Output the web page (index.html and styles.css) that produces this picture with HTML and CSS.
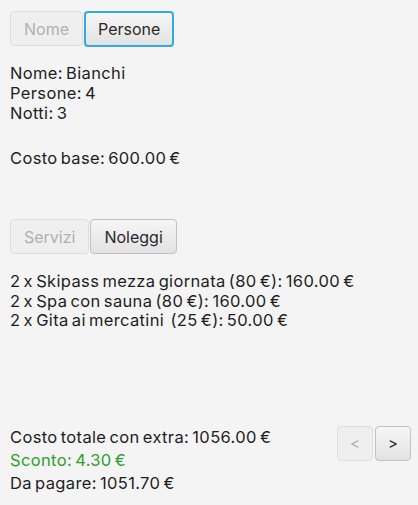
FILE: index.html
```html
<!DOCTYPE html>
<html lang="it">
<head>
<meta charset="utf-8">
<title>Riepilogo</title>
<link rel="stylesheet" href="styles.css">
</head>
<body>
<div class="page">
  <div class="toggle-row">
    <button class="btn btn-off">Nome</button>
    <button class="btn btn-on btn-focus">Persone</button>
  </div>
  <div class="info">
    <div class="line">Nome: Bianchi</div>
    <div class="line">Persone: 4</div>
    <div class="line">Notti: 3</div>
  </div>
  <div class="base line">Costo base: 600.00 €</div>

  <div class="toggle-row toggle-row-2">
    <button class="btn btn-off">Servizi</button>
    <button class="btn btn-on">Noleggi</button>
  </div>
  <div class="services">
    <div class="line">2 x Skipass mezza giornata (80 €): 160.00 €</div>
    <div class="line">2 x Spa con sauna (80 €): 160.00 €</div>
    <div class="line">2 x Gita ai mercatini&nbsp; (25 €): 50.00 €</div>
  </div>

  <div class="footer">
    <div class="totals">
      <div class="tline">Costo totale con extra: 1056.00 €</div>
      <div class="tline discount">Sconto: 4.30 €</div>
      <div class="tline">Da pagare: 1051.70 €</div>
    </div>
    <div class="nav">
      <button class="btn btn-off btn-nav">&lt;</button>
      <button class="btn btn-on btn-nav">&gt;</button>
    </div>
  </div>
</div>
</body>
</html>
```
FILE: styles.css
```css
html, body {
  margin: 0;
  padding: 0;
  background: #f4f4f4;
}
body {
  font-family: "Inter", "Liberation Sans", sans-serif;
  font-size: 16.5px;
  letter-spacing: 0.35px;
  word-spacing: -1.8px;
  color: #1e1e1e;
}
.page {
  padding: 11px 7px 0 10px;
}
.toggle-row {
  display: flex;
  gap: 1px;
  height: 36px;
}
.btn {
  font-family: inherit;
  font-size: 16px;
  letter-spacing: 0;
  word-spacing: 0;
  height: 35px;
  margin: 0;
  padding: 0 13px;
  border-radius: 4px;
  box-sizing: border-box;
}
.btn-off {
  background: #efefef;
  border: 1px solid #dedede;
  color: #b0b0b0;
}
.btn-on {
  background: linear-gradient(#f6f6f6, #e2e2e2);
  border: 1px solid #c2c2c2;
  color: #2a2a2a;
}
.btn-focus {
  border: 2px solid #35a9e3;
  height: 36px;
  padding: 0 12px;
}
.line {
  line-height: 20px;
}
.info {
  margin-top: 16px;
}
.base {
  margin-top: 25px;
}
.toggle-row-2 {
  margin-top: 51px;
}
.services {
  margin-top: 17px;
}
.services .line {
  line-height: 19.5px;
}
.footer {
  margin-top: 94px;
  display: flex;
  justify-content: space-between;
  align-items: flex-start;
}
.tline {
  line-height: 23px;
}
.tline:first-child {
  margin-top: 1px;
}
.discount {
  color: #2f9e2f;
}
.nav {
  display: flex;
  gap: 2px;
  margin-top: 1px;
}
.btn-nav {
  width: 36px;
  padding: 0;
  font-size: 15px;
}
```
